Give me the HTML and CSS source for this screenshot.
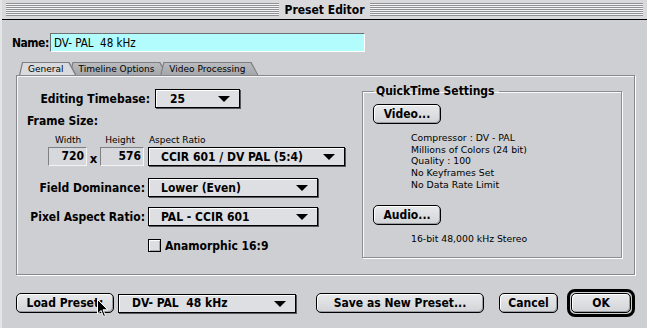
FILE: index.html
```html
<!DOCTYPE HTML>
<html>
<head>
    <meta http-equiv="Content-Type" content="text/html;charset=UTF-8">
    <title>Preset Editor</title>
    <link rel="stylesheet" href="styles.css">
</head>
<body>
<div class="window">
    <div class="titlebar">
        <div class="stripes"></div>
        <span class="title">Preset Editor</span>
        <div class="stripes"></div>
    </div>
    <div class="namerow">
        <span class="lbl">Name:</span>
        <div class="namefield">DV- PAL&nbsp;&nbsp;48 kHz</div>
    </div>
    <div class="tabs">
        <div class="tab active"><span>General</span></div>
        <div class="tab"><span>Timeline Options</span></div>
        <div class="tab"><span>Video Processing</span></div>
    </div>
    <div class="panel">
        <div class="leftcol">
            <div class="row row-tb">
                <span class="lbl rlbl tb">Editing Timebase:</span>
                <div class="popup w85"><span>25</span><i class="tri"></i></div>
            </div>
            <div class="lbl framesize">Frame Size:</div>
            <div class="smalllbls">
                <span class="sl-w">Width</span>
                <span class="sl-h">Height</span>
                <span class="sl-a">Aspect Ratio</span>
            </div>
            <div class="framerow">
                <div class="numfield wfield">720</div>
                <span class="times">x</span>
                <div class="numfield hfield">576</div>
                <div class="popup w197"><span>CCIR 601 / DV PAL (5:4)</span><i class="tri"></i></div>
            </div>
            <div class="row row-fd">
                <span class="lbl rlbl">Field Dominance:</span>
                <div class="popup w170"><span>Lower (Even)</span><i class="tri"></i></div>
            </div>
            <div class="row row-pa">
                <span class="lbl rlbl">Pixel Aspect Ratio:</span>
                <div class="popup w170"><span>PAL - CCIR 601</span><i class="tri"></i></div>
            </div>
            <div class="checkrow">
                <span class="checkbox"></span>
                <span class="lbl">Anamorphic 16:9</span>
            </div>
        </div>
        <fieldset class="group">
            <legend class="lbl">QuickTime Settings</legend>
            <div class="btn qtbtn">Video...</div>
            <div class="desc">
                Compressor : DV - PAL<br>
                Millions of Colors (24 bit)<br>
                Quality : 100<br>
                No Keyframes Set<br>
                No Data Rate Limit
            </div>
            <div class="btn qtbtn audio">Audio...</div>
            <div class="desc">16-bit 48,000 kHz Stereo</div>
        </fieldset>
    </div>
    <div class="bottom">
        <div class="btn loadbtn">Load Preset:</div>
        <div class="popup w178 presetpop"><span>DV- PAL&nbsp;&nbsp;48 kHz</span><i class="tri"></i></div>
        <div class="btn savebtn">Save as New Preset...</div>
        <div class="btn cancelbtn">Cancel</div>
        <div class="okring"><div class="btn okbtn">OK</div></div>
    </div>
    <svg class="cursor" width="12" height="19" viewBox="0 0 12 19">
        <path d="M0.5 0.5 L0.5 15 L4 11.5 L6.5 17.5 L8.5 16.7 L6 10.8 L10.8 10.8 Z" fill="#000" stroke="#fff" stroke-width="1"/>
    </svg>
</div>
</body>
</html>
```

FILE: styles.css
```css
* {
    margin: 0;
    padding: 0;
    box-sizing: border-box;
}

body {
    width: 647px;
    height: 328px;
    overflow: hidden;
    background: #cdcfd2;
    font-family: "DejaVu Sans Condensed", "DejaVu Sans", sans-serif;
    color: #000;
}

.window {
    position: relative;
    width: 647px;
    height: 328px;
    border-left: 2px solid #e4e5e7;
}

.titlebar {
    height: 20px;
    display: flex;
    align-items: center;
    gap: 6px;
    padding: 0 4px;
    background: #d9d9db;
    border-bottom: 1px solid #000;
}

.stripes {
    flex: 1;
    height: 13px;
    background: repeating-linear-gradient(#8f9094 0 1px, #f4f4f4 1px 2px);
}

.title {
    font-weight: bold;
    font-size: 12px;
}

.lbl {
    font-weight: bold;
    font-size: 12px;
}

.namerow {
    display: flex;
    align-items: center;
    margin-top: 13px;
    padding-left: 10px;
    height: 19px;
}

.namerow .lbl {
    width: 38px;
    letter-spacing: -0.5px;
}

.namefield {
    width: 315px;
    height: 19px;
    background: #b2fcfd;
    border-top: 1px solid #6d6f73;
    border-left: 1px solid #6d6f73;
    border-bottom: 1px solid #fff;
    border-right: 1px solid #fff;
    font-size: 11.5px;
    padding: 2px 0 0 3px;
}

.tabs {
    display: flex;
    margin-top: 10px;
    padding-left: 17px;
    height: 13px;
    position: relative;
    z-index: 1;
}

.tab {
    height: 13px;
    padding: 1px 1px 0 1px;
    background: #7c7e82;
    clip-path: polygon(0 100%, 3px 0, calc(100% - 7px) 0, 100% 100%);
    margin-right: -7px;
}

.tab span {
    display: block;
    height: 12px;
    padding: 0 12px 0 8px;
    font-family: "DejaVu Sans", sans-serif;
    font-size: 9px;
    line-height: 12px;
    background: linear-gradient(#b9bbbe, #a4a6aa);
    clip-path: polygon(0 100%, 3px 0, calc(100% - 7px) 0, 100% 100%);
}

.tab.active {
    z-index: 2;
}

.tab.active span {
    background: #d9dadd;
    height: 13px;
}

.panel {
    margin-left: 14px;
    width: 619px;
    height: 200px;
    border: 1px solid #86888c;
    box-shadow: inset 1px 1px 0 #f6f6f6, 1px 1px 0 #fff;
    display: flex;
}

.leftcol {
    width: 345px;
    padding-top: 13px;
}

.row {
    display: flex;
    align-items: center;
    height: 19px;
}

.rlbl {
    width: 128px;
    text-align: right;
    margin-right: 3px;
}

.rlbl.tb {
    width: 133px;
    margin-right: 5px;
}

.popup {
    position: relative;
    height: 19px;
    background: #dedfe2;
    border: 1px solid #000;
    box-shadow: inset 1px 1px 0 #fff, 1px 1px 0 #55575b;
    display: flex;
    align-items: center;
    padding-left: 10px;
    font-weight: bold;
    font-size: 12px;
}

.tri {
    position: absolute;
    right: 9px;
    top: 6px;
    width: 0;
    height: 0;
    border-left: 6px solid transparent;
    border-right: 6px solid transparent;
    border-top: 6px solid #000;
}

.w85 { width: 85px; padding-left: 14px; }
.w170 { width: 170px; padding-left: 12px; }
.w197 { width: 197px; padding-left: 12px; }
.w178 { width: 178px; padding-left: 13px; }

.framesize {
    margin-top: 5px;
    padding-left: 10px;
    height: 17px;
    line-height: 17px;
}

.smalllbls {
    display: flex;
    margin-top: 4px;
    height: 13px;
    font-family: "DejaVu Sans", sans-serif;
    font-size: 9px;
    line-height: 13px;
}

.sl-w { margin-left: 38px; }
.sl-h { margin-left: 24px; }
.sl-a { margin-left: 14px; }

.framerow {
    display: flex;
    align-items: center;
    height: 19px;
    padding-left: 31px;
}

.numfield {
    height: 19px;
    background: #d7d8db;
    border-top: 1px solid #7e8084;
    border-left: 1px solid #7e8084;
    border-bottom: 1px solid #f4f4f4;
    border-right: 1px solid #f4f4f4;
    text-align: right;
    font-weight: bold;
    font-size: 12px;
    line-height: 17px;
    padding-right: 2px;
}

.wfield { width: 39px; }
.hfield { width: 44px; margin-right: 4px; }

.times {
    width: 13px;
    text-align: center;
    font-weight: bold;
    font-size: 13px;
    padding-top: 3px;
}

.row-fd { margin-top: 12px; }
.row-pa { margin-top: 10px; }

.checkrow {
    display: flex;
    align-items: center;
    margin-top: 13px;
    padding-left: 131px;
    height: 13px;
    gap: 4px;
}

.checkbox {
    width: 13px;
    height: 13px;
    border: 1px solid #000;
    background: #dddee1;
    box-shadow: inset 1px 1px 0 #fff, inset -1px -1px 0 #a7a9ad;
}

.group {
    margin-top: 8px;
    width: 260px;
    height: 174px;
    border: 1px solid #8b8d91;
    box-shadow: inset 1px 1px 0 #fbfbfb, 1px 1px 0 #fff;
    padding: 0 0 0 10px;
}

.group legend {
    padding: 0 4px 0 2px;
    margin-left: 1px;
}

.btn {
    height: 20px;
    border: 1px solid #000;
    border-radius: 5px;
    background: linear-gradient(#e8e9eb, #d3d4d7);
    box-shadow: inset 1px 1px 0 #fff, inset -1px -1px 0 #9a9ca0;
    font-weight: bold;
    font-size: 12px;
    display: flex;
    align-items: center;
    justify-content: center;
}

.qtbtn {
    width: 68px;
    margin-top: 6px;
}

.audio {
    margin-top: 14px;
}

.desc {
    margin-top: 8px;
    padding-left: 38px;
    font-family: "DejaVu Sans", sans-serif;
    font-size: 9.3px;
    line-height: 11.7px;
}

.bottom {
    display: flex;
    align-items: center;
    margin-top: 14px;
    padding-left: 14px;
    height: 28px;
}

.loadbtn { width: 98px; margin-right: 4px; }
.presetpop { margin-right: 20px; }
.savebtn { width: 168px; margin-right: 15px; }
.cancelbtn { width: 59px; margin-right: 9px; }

.okring {
    width: 68px;
    height: 28px;
    border: 3px solid #000;
    border-radius: 8px;
    padding: 1px;
}

.okbtn {
    height: 20px;
}

.cursor {
    position: absolute;
    left: 95px;
    top: 299px;
}
```
